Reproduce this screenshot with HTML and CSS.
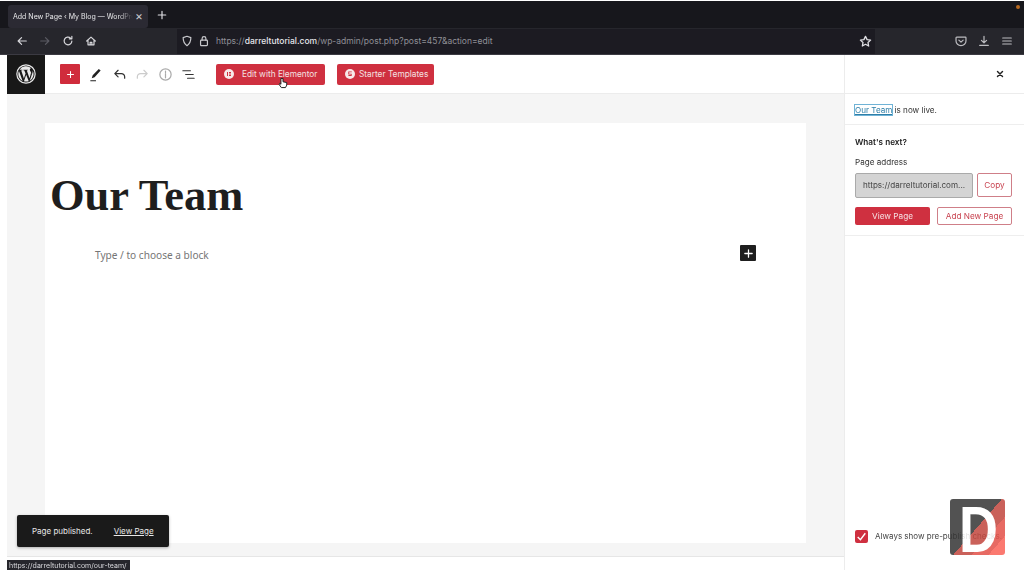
FILE: index.html
```html
<!DOCTYPE html>
<html lang="en">
<head>
<meta charset="utf-8">
<title>Add New Page ‹ My Blog — WordPress</title>
<link rel="stylesheet" href="styles.css">
</head>
<body>
<div class="screen">
  <div class="tabbar">
    <div class="tab"><span class="tab-title">Add New Page ‹ My Blog — WordPress</span><span class="tab-close">×</span></div>
    <svg class="ico newtab" viewBox="0 0 12 12"><path d="M6 1.500v9M1.500 6h9"/></svg>
    <span class="notify"></span>
  </div>
  <div class="navbar">
    <svg class="ico nav-ico" viewBox="0 0 14 14"><path d="M12 7H2.500M6.500 3L2.500 7l4 4"/></svg>
    <svg class="ico nav-ico dim" viewBox="0 0 14 14"><path d="M2 7h9.500M7.500 3l4 4-4 4"/></svg>
    <svg class="ico nav-ico" viewBox="0 0 14 14"><path d="M11.500 7A4.500 4.500 0 1 1 10 3.600M11.500 1.500v3h-3"/></svg>
    <svg class="ico nav-ico" viewBox="0 0 14 14"><path d="M2 7l5-4.500L12 7M3.500 6v5.500h7V6M6 11.500V8.500h2v3"/></svg>
    <div class="urlbar">
      <svg class="ico url-ico" viewBox="0 0 14 14"><path d="M7 1.500l4.500 1.500c0 4.500-1.500 7.500-4.500 9.500C4 10.500 2.500 7.500 2.500 3z"/></svg>
      <svg class="ico url-ico" viewBox="0 0 14 14"><rect x="3" y="6" width="8" height="6.500" rx="1"/><path d="M4.800 6V4a2.200 2.200 0 0 1 4.400 0v2"/></svg>
      <span class="url">https://<b>darreltutorial.com</b>/wp-admin/post.php?post=457&amp;action=edit</span>
      <svg class="ico star" viewBox="0 0 14 14"><path d="M7 1.500l1.700 3.500 3.800.5-2.800 2.600.7 3.800L7 10l-3.400 1.900.7-3.800L1.500 5.500l3.800-.5z"/></svg>
    </div>
    <div class="nav-right">
      <svg class="ico nav-ico" viewBox="0 0 14 14"><path d="M2 2.500h10a.8.8 0 0 1 .8.8V7A5.800 5.300 0 0 1 1.200 7V3.300a.8.8 0 0 1 .8-.8zM4.500 6L7 8.300 9.500 6"/></svg>
      <svg class="ico nav-ico" viewBox="0 0 14 14"><path d="M7 1.500v7.500M4 6.200L7 9.200l3-3M2 12.200h10"/></svg>
      <svg class="ico nav-ico" viewBox="0 0 14 14"><path d="M2 3.500h10M2 7h10M2 10.500h10"/></svg>
    </div>
  </div>
  <div class="editor">
    <div class="workspace">
      <header class="topbar">
        <div class="wp-logo">
          <svg viewBox="0 0 24 24" class="wp-mark"><circle cx="12" cy="12" r="10" class="wp-ring"/><path class="wp-w" d="M3.600 12c0 3.300 1.900 6.200 4.700 7.500L4.300 8.600A8.300 8.300 0 0 0 3.600 12zm14.100-.4c0-1-.4-1.800-.7-2.300-.4-.7-.8-1.300-.8-2 0-.8.600-1.500 1.400-1.500h.1A8.400 8.400 0 0 0 5 7.400h.5c.9 0 2.200-.1 2.200-.1.400 0 .5.600 0 .7 0 0-.4 0-.9.100l2.900 8.700 1.800-5.300-1.300-3.400-.8-.1c-.4 0-.4-.7.100-.7 0 0 1.300.1 2.100.1.900 0 2.200-.1 2.200-.1.400 0 .5.600 0 .7 0 0-.4 0-.9.100l2.900 8.600.8-2.600c.3-1.100.6-1.900.6-2.600zm-5.500 1.200l-2.400 7.100a8.400 8.400 0 0 0 5.200-.1l-.1-.1zm7-4.600l.1.900c0 .8-.2 1.800-.7 3l-2.500 7.300A8.400 8.400 0 0 0 19.200 8.200z"/></svg>
        </div>
        <div class="tools">
          <button class="add-btn"><svg class="ico" viewBox="0 0 12 12"><path d="M6 2v8M2 6h8"/></svg></button>
          <svg class="tool" viewBox="0 0 16 16"><path class="fill" d="M11.500 2l2 1.800-6.500 7-3 1.200 1-3.200zM2.500 14h6v1.200h-6z"/></svg>
          <svg class="tool line" viewBox="0 0 16 16"><path d="M3 7h7a3.500 3.500 0 0 1 3.500 3.500V12M6.500 3.500L3 7l3.500 3.500"/></svg>
          <svg class="tool line faint" viewBox="0 0 16 16"><path d="M13 7H6a3.500 3.500 0 0 0-3.500 3.500V12M9.500 3.500L13 7l-3.500 3.500"/></svg>
          <svg class="tool line faint2" viewBox="0 0 16 16"><circle cx="8" cy="8" r="6"/><path d="M8 7v4.500M8 4.500v1.300"/></svg>
          <svg class="tool line" viewBox="0 0 16 16"><path d="M2 4h8M5 8h8M7 12h7"/></svg>
        </div>
        <button class="red-btn elementor"><svg class="btn-badge" viewBox="0 0 10 10"><circle class="badge-bg" cx="5" cy="5" r="5"/><path class="badge-mark" d="M3 3h1v4H3zM5 3h2v1H5zM5 4.500h2v1H5zM5 6h2v1H5z"/></svg><span>Edit with Elementor</span></button>
        <button class="red-btn starter"><svg class="btn-badge" viewBox="0 0 10 10"><circle class="badge-bg" cx="5" cy="5" r="5"/><path class="badge-mark" d="M6.800 3.300H4.200v1.500h2.500v2.100H3.400V6h2.400v-.4H3.300V2.500h3.500z"/></svg><span>Starter Templates</span></button>
      </header>
      <main class="canvas">
        <article class="page">
          <h1 class="title">Our Team</h1>
          <div class="block-row">
            <p class="placeholder">Type / to choose a block</p>
            <button class="block-add"><svg class="ico" viewBox="0 0 12 12"><path d="M6 2v8M2 6h8"/></svg></button>
          </div>
        </article>
      </main>
      <div class="footer-strip"></div>
    </div>
    <aside class="sidebar">
      <div class="side-head"><svg class="ico close" viewBox="0 0 12 12"><path d="M3 3l6 6M9 3l-6 6"/></svg></div>
      <div class="side-live"><a class="live-link">Our Team</a> is now live.</div>
      <section class="side-next">
        <h2 class="next-title">What's next?</h2>
        <label class="addr-label">Page address</label>
        <div class="addr-row">
          <div class="addr-input">https://darreltutorial.com...</div>
          <button class="btn-outline copy">Copy</button>
        </div>
        <div class="action-row">
          <button class="btn-solid">View Page</button>
          <button class="btn-outline addnew">Add New Page</button>
        </div>
      </section>
      <div class="side-fill"></div>
      <div class="side-check">
        <span class="checkbox"><svg viewBox="0 0 12 12"><path d="M2.500 6.500L5 9l4.500-6"/></svg></span>
        <span class="check-label">Always show pre-publish checks.</span>
      </div>
    </aside>
  </div>
  <div class="snackbar"><span>Page published.</span><a>View Page</a></div>
  <div class="statusbar">https://darreltutorial.com/our-team/</div>
  <svg class="cursor" viewBox="0 0 12 14"><path d="M3.500 1.500v7L2 7.500 1.500 9 4 12.500h5l1.500-3V6.500l-4.500-1V1.500z"/></svg>
  <div class="watermark"><span class="wm-letter">D</span></div>
</div>
</body>
</html>
```
FILE: styles.css
```css
* { box-sizing: border-box; }
html, body { margin: 0; padding: 0; }
body { background: #fff; font-family: "Inter", "Liberation Sans", sans-serif; overflow: hidden; }
button { font-family: inherit; cursor: default; }
.screen { position: relative; width: 1024px; height: 570px; overflow: hidden; display: flex; flex-direction: column; padding-top: 1px; filter: blur(0.5px); }

.ico { fill: none; stroke: currentColor; stroke-width: 1.400; stroke-linecap: round; stroke-linejoin: round; flex: none; }

.tabbar { height: 27px; background: #17171c; display: flex; align-items: center; padding-left: 8px; position: relative; flex: none; }
.tab { width: 140px; height: 23px; margin-top: 3px; background: #2b2a33; border-radius: 3px; display: flex; align-items: center; padding: 0 5px; color: #e8e8ea; font-size: 7px; }
.tab-title { width: 120px; white-space: nowrap; overflow: hidden; -webkit-mask-image: linear-gradient(90deg, #000 88%, transparent); mask-image: linear-gradient(90deg, #000 88%, transparent); }
.tab-close { margin-left: 2px; font-size: 12px; line-height: 1; color: #c8c8cc; }
.newtab { width: 10px; height: 10px; margin-left: 9px; margin-top: 1px; color: #e0e0e4; }
.notify { position: absolute; right: 4px; top: 4px; width: 4px; height: 4px; border-radius: 50%; background: #b8691f; }

.navbar { height: 27px; border-bottom: 1px solid #3b3a42; background: #26262c; display: flex; align-items: center; padding-left: 16px; flex: none; color: #dcdce0; }
.nav-ico { width: 12px; height: 12px; margin-right: 11px; color: #d6d6da; }
.nav-ico.dim { color: #5a5a62; }
.urlbar { width: 698px; height: 25px; margin-left: 69px; background: #1c1b22; display: flex; align-items: center; padding-left: 4px; color: #b8b8bc; flex: none; }
.url-ico { width: 12px; height: 12px; margin-right: 5px; color: #c8c8cc; }
.url { font-size: 8.500px; color: #8f8f96; margin-left: 1px; white-space: nowrap; flex: 1; }
.url b { color: #e6e6ea; font-weight: 500; }
.star { width: 13px; height: 13px; margin-right: 3px; color: #e0e0e4; }
.nav-right { margin-left: 80px; display: flex; }
.nav-right .nav-ico { margin-right: 11px; color: #bcbcc0; }

.editor { flex: 1; display: flex; padding-left: 7px; min-height: 0; }
.workspace { flex: 1; min-width: 0; display: flex; flex-direction: column; }
.topbar { height: 39px; background: #fff; border-bottom: 1px solid #ececec; display: flex; align-items: center; flex: none; }
.wp-logo { width: 38px; height: 39px; background: #181818; display: flex; align-items: center; justify-content: center; flex: none; }
.wp-mark { width: 22px; height: 22px; }
.wp-ring { fill: none; stroke: #e9e9e9; stroke-width: 1.300; }
.wp-w { fill: #e9e9e9; }
.tools { display: flex; align-items: center; margin-left: 15px; }
.add-btn { width: 20px; height: 20px; padding: 0; border: 0; border-radius: 1px; background: #d02c3c; color: #fff; display: flex; align-items: center; justify-content: center; }
.add-btn .ico { width: 9px; height: 9px; }
.tool { width: 15px; height: 15px; margin-left: 8px; flex: none; }
.tool:nth-child(3) { margin-left: 9px; }
.tool .fill { fill: #222; }
.tool.line { fill: none; stroke: #333; stroke-width: 1.300; stroke-linecap: round; stroke-linejoin: round; }
.tool.faint { stroke: #ccc; }
.tool.faint2 { stroke: #aaa; }
.red-btn { height: 21px; border: 0; border-radius: 2px; background: #cf3040; color: #f4e0e2; font-size: 8.300px; display: flex; align-items: center; padding: 0 8px; flex: none; white-space: nowrap; }
.btn-badge { width: 10px; height: 10px; margin-right: 8px; flex: none; }
.badge-bg { fill: #f7e9ea; }
.badge-mark { fill: #cf3040; }
.elementor { width: 109px; margin-left: 20px; }
.elementor .btn-badge { margin-right: 8px; }
.starter { width: 97px; margin-left: 12px; }
.starter .btn-badge { margin-right: 4px; }

.canvas { flex: 1; background: #f5f5f5; padding: 29px 38px 13px; min-height: 0; }
.page { width: 761px; height: 100%; background: #fff; display: flex; flex-direction: column; }
.title { margin: 46px 0 0 5px; font-family: "Liberation Serif", serif; font-weight: 700; font-size: 44.500px; line-height: 52px; color: #1e1e1e; }
.block-row { display: flex; align-items: flex-start; margin: 24px 50px 0 50px; justify-content: space-between; }
.placeholder { margin: 3px 0 0; font-family: "Noto Sans", sans-serif; font-size: 10.100px; line-height: 15px; color: #757575; }
.block-add { width: 16px; height: 16px; padding: 0; border: 0; border-radius: 1px; background: #1e1e1e; color: #fff; display: flex; align-items: center; justify-content: center; }
.block-add .ico { width: 11px; height: 11px; }
.footer-strip { height: 14px; background: #fff; border-top: 1px solid #e6e6e6; flex: none; }

.sidebar { width: 180px; flex: none; display: flex; flex-direction: column; background: #fff; border-left: 1px solid #ececec; font-size: 8.100px; color: #333; }
.side-head { height: 39px; border-bottom: 1px solid #ececec; display: flex; align-items: center; justify-content: flex-end; padding-right: 19px; flex: none; }
.close { width: 10px; height: 10px; color: #222; stroke-width: 1.700; }
.side-live { height: 31px; padding: 10px 10px 0; border-bottom: 1px solid #eee; line-height: 12px; flex: none; }
.live-link { color: #2f7fa8; text-decoration: underline; outline: 1px solid #6fb3d6; }
.side-next { padding: 11px 12px 10px 10px; border-bottom: 1px solid #eee; flex: none; }
.next-title { margin: 0 0 8px; font-size: 8.200px; font-weight: 600; line-height: 12px; color: #222; }
.addr-label { display: block; line-height: 12px; margin-bottom: 5px; }
.addr-row { display: flex; justify-content: space-between; }
.addr-input { width: 118px; height: 25px; background: #d4d4d4; border: 1px solid #aaa; border-radius: 2px; padding-left: 7px; line-height: 23px; color: #444; white-space: nowrap; }
.btn-outline { background: #fff; border: 1px solid #cf7f88; border-radius: 2px; color: #c8424f; font-size: 8.200px; padding: 0; }
.copy { width: 35px; height: 24px; }
.action-row { display: flex; justify-content: space-between; margin-top: 9px; }
.btn-solid { width: 75px; height: 18px; background: #cf3040; border: 0; border-radius: 2px; color: #f6e2e4; font-size: 8.200px; padding: 0; }
.addnew { width: 75px; height: 18px; }
.side-fill { flex: 1; }
.side-check { height: 43px; display: flex; align-items: center; padding: 0 10px 25px; flex: none; }
.checkbox { width: 13px; height: 13px; border-radius: 2px; background: #cf3040; display: flex; margin-right: 7px; flex: none; }
.checkbox svg { width: 13px; height: 13px; fill: none; stroke: #fff; stroke-width: 1.300; }
.check-label { white-space: nowrap; color: #444; font-size: 8px; }

.snackbar { position: absolute; left: 17px; top: 515px; width: 152px; height: 32px; background: #1a1a1a; border-radius: 2px; box-shadow: 0 1px 3px rgba(0,0,0,.3); display: flex; align-items: center; padding-left: 15px; padding-bottom: 1px; gap: 21px; color: #e8e8e8; font-size: 8px; }
.snackbar a { text-decoration: underline; }
.statusbar { position: absolute; left: 7px; top: 560px; width: 123px; height: 10px; background: #26262c; color: #d8d8dc; font-size: 7px; line-height: 11px; padding-left: 2px; white-space: nowrap; overflow: hidden; }
.cursor { position: absolute; left: 278px; top: 77px; width: 10px; height: 12px; fill: #fff; stroke: #222; stroke-width: 1.200; }
.watermark { position: absolute; left: 950px; top: 499px; width: 55px; height: 56px; border-radius: 3px; overflow: hidden; background: linear-gradient(131deg, #363636 0 50%, #c2483f 50% 68%, #e4524a 68% 84%, #fb6359 84%); opacity: .86; text-align: center; }
.wm-letter { display: block; font-family: "Liberation Sans", sans-serif; font-weight: 700; font-size: 65px; line-height: 62px; color: #fff; transform: scaleX(.83); margin-left: 2px; }
```
